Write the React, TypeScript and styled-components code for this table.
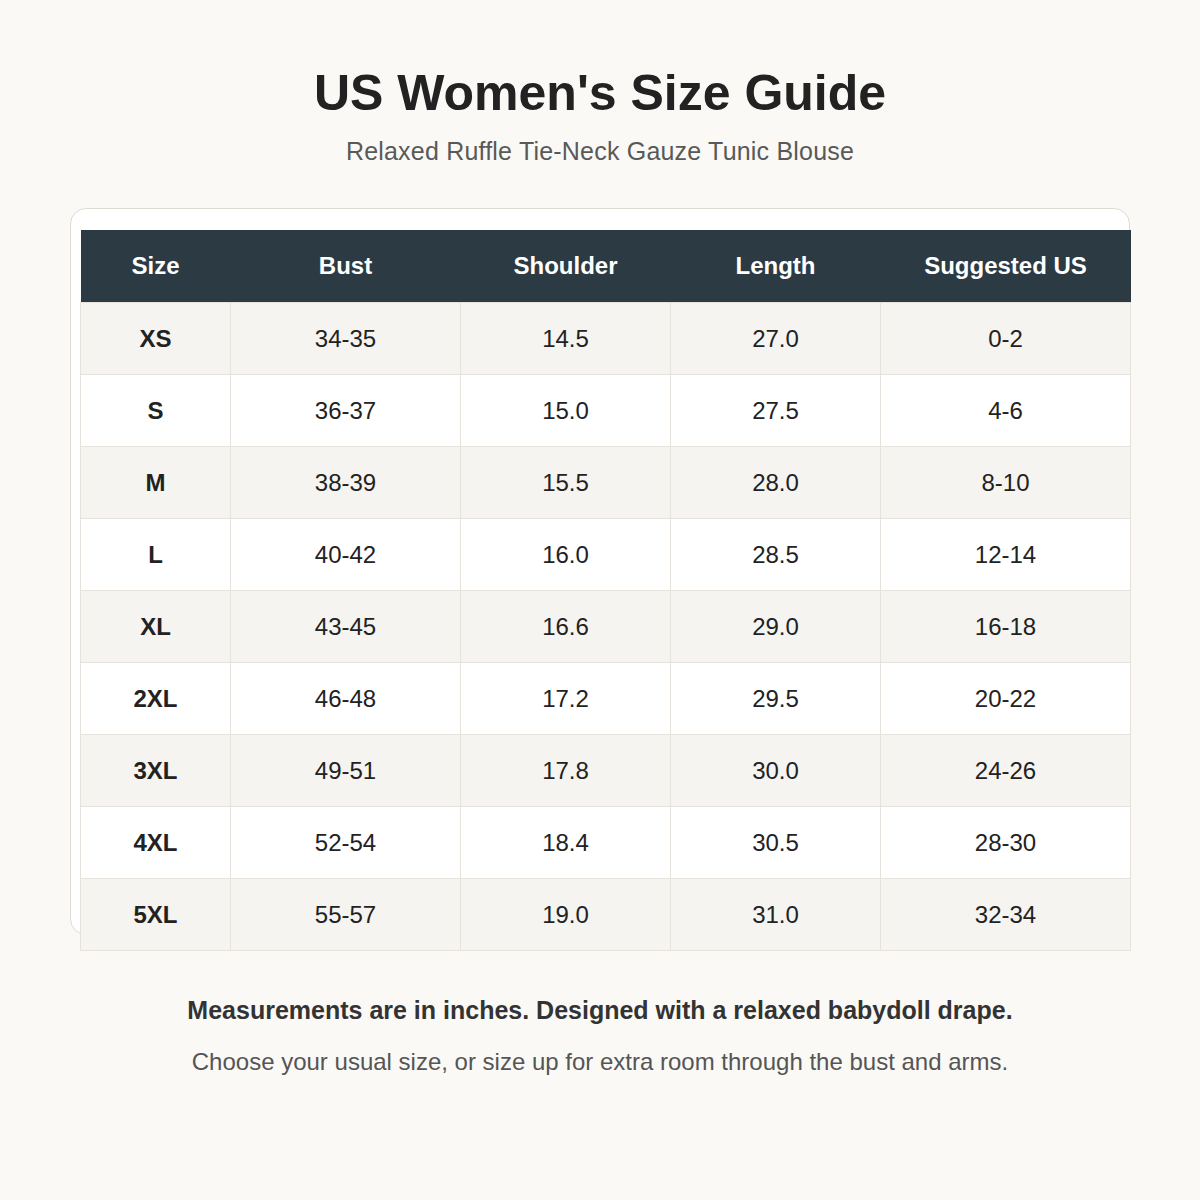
import React from "react";
import styled, { createGlobalStyle } from "styled-components";

const GlobalStyle = createGlobalStyle`
  html, body {
    margin: 0;
    padding: 0;
    background: #faf9f6;
  }
  body {
    font-family: "Liberation Sans", Arial, sans-serif;
  }
`;

const Page = styled.div`
  width: 1200px;
  height: 1200px;
  box-sizing: border-box;
  padding-top: 60px;
  background: #faf9f6;
  display: flex;
  flex-direction: column;
  align-items: center;
`;

const Title = styled.h1`
  margin: 0;
  font-size: 50px;
  line-height: 66px;
  font-weight: 700;
  color: #222222;
`;

const Subtitle = styled.p`
  margin: 10px 0 0;
  font-size: 25px;
  letter-spacing: 0.2px;
  line-height: 30px;
  color: #595959;
`;

const Card = styled.div`
  box-sizing: border-box;
  width: 1060px;
  height: 727px;
  margin-top: 42px;
  padding: 21px 0 0 9px;
  background: #ffffff;
  border: 1px solid #dedbd3;
  border-radius: 16px;
`;

const Table = styled.table`
  width: 1050px;
  border-collapse: collapse;
  table-layout: fixed;
`;

const HeadCell = styled.th<{ $w: number }>`
  width: ${(p) => p.$w}px;
  height: 72px;
  padding: 0;
  background: #2c3a44;
  color: #ffffff;
  font-size: 24px;
  font-weight: 700;
  text-align: center;
`;

const Row = styled.tr<{ $alt: boolean }>`
  background: ${(p) => (p.$alt ? "#f5f4f0" : "#ffffff")};
`;

const Cell = styled.td<{ $bold?: boolean }>`
  height: 71px;
  padding: 0;
  border: 1px solid #e7e3dc;
  text-align: center;
  font-size: 24px;
  color: #222222;
  font-weight: ${(p) => (p.$bold ? 700 : 400)};
`;

const Note = styled.p`
  margin: 60px 0 0;
  font-size: 25px;
  line-height: 30px;
  font-weight: 700;
  color: #333333;
`;

const SubNote = styled.p`
  margin: 22px 0 0;
  font-size: 24px;
  line-height: 30px;
  color: #555555;
`;

const headers: [string, number][] = [
  ["Size", 150],
  ["Bust", 230],
  ["Shoulder", 210],
  ["Length", 210],
  ["Suggested US", 250],
];

const rows: string[][] = [
  ["XS", "34-35", "14.5", "27.0", "0-2"],
  ["S", "36-37", "15.0", "27.5", "4-6"],
  ["M", "38-39", "15.5", "28.0", "8-10"],
  ["L", "40-42", "16.0", "28.5", "12-14"],
  ["XL", "43-45", "16.6", "29.0", "16-18"],
  ["2XL", "46-48", "17.2", "29.5", "20-22"],
  ["3XL", "49-51", "17.8", "30.0", "24-26"],
  ["4XL", "52-54", "18.4", "30.5", "28-30"],
  ["5XL", "55-57", "19.0", "31.0", "32-34"],
];

export default function App() {
  return (
    <>
      <GlobalStyle />
      <Page>
        <Title>US Women's Size Guide</Title>
        <Subtitle>Relaxed Ruffle Tie-Neck Gauze Tunic Blouse</Subtitle>
        <Card>
          <Table>
            <thead>
              <tr>
                {headers.map(([h, w]) => (
                  <HeadCell key={h} $w={w}>
                    {h}
                  </HeadCell>
                ))}
              </tr>
            </thead>
            <tbody>
              {rows.map((r, i) => (
                <Row key={r[0]} $alt={i % 2 === 0}>
                  {r.map((c, j) => (
                    <Cell key={j} $bold={j === 0}>
                      {c}
                    </Cell>
                  ))}
                </Row>
              ))}
            </tbody>
          </Table>
        </Card>
        <Note>Measurements are in inches. Designed with a relaxed babydoll drape.</Note>
        <SubNote>Choose your usual size, or size up for extra room through the bust and arms.</SubNote>
      </Page>
    </>
  );
}
